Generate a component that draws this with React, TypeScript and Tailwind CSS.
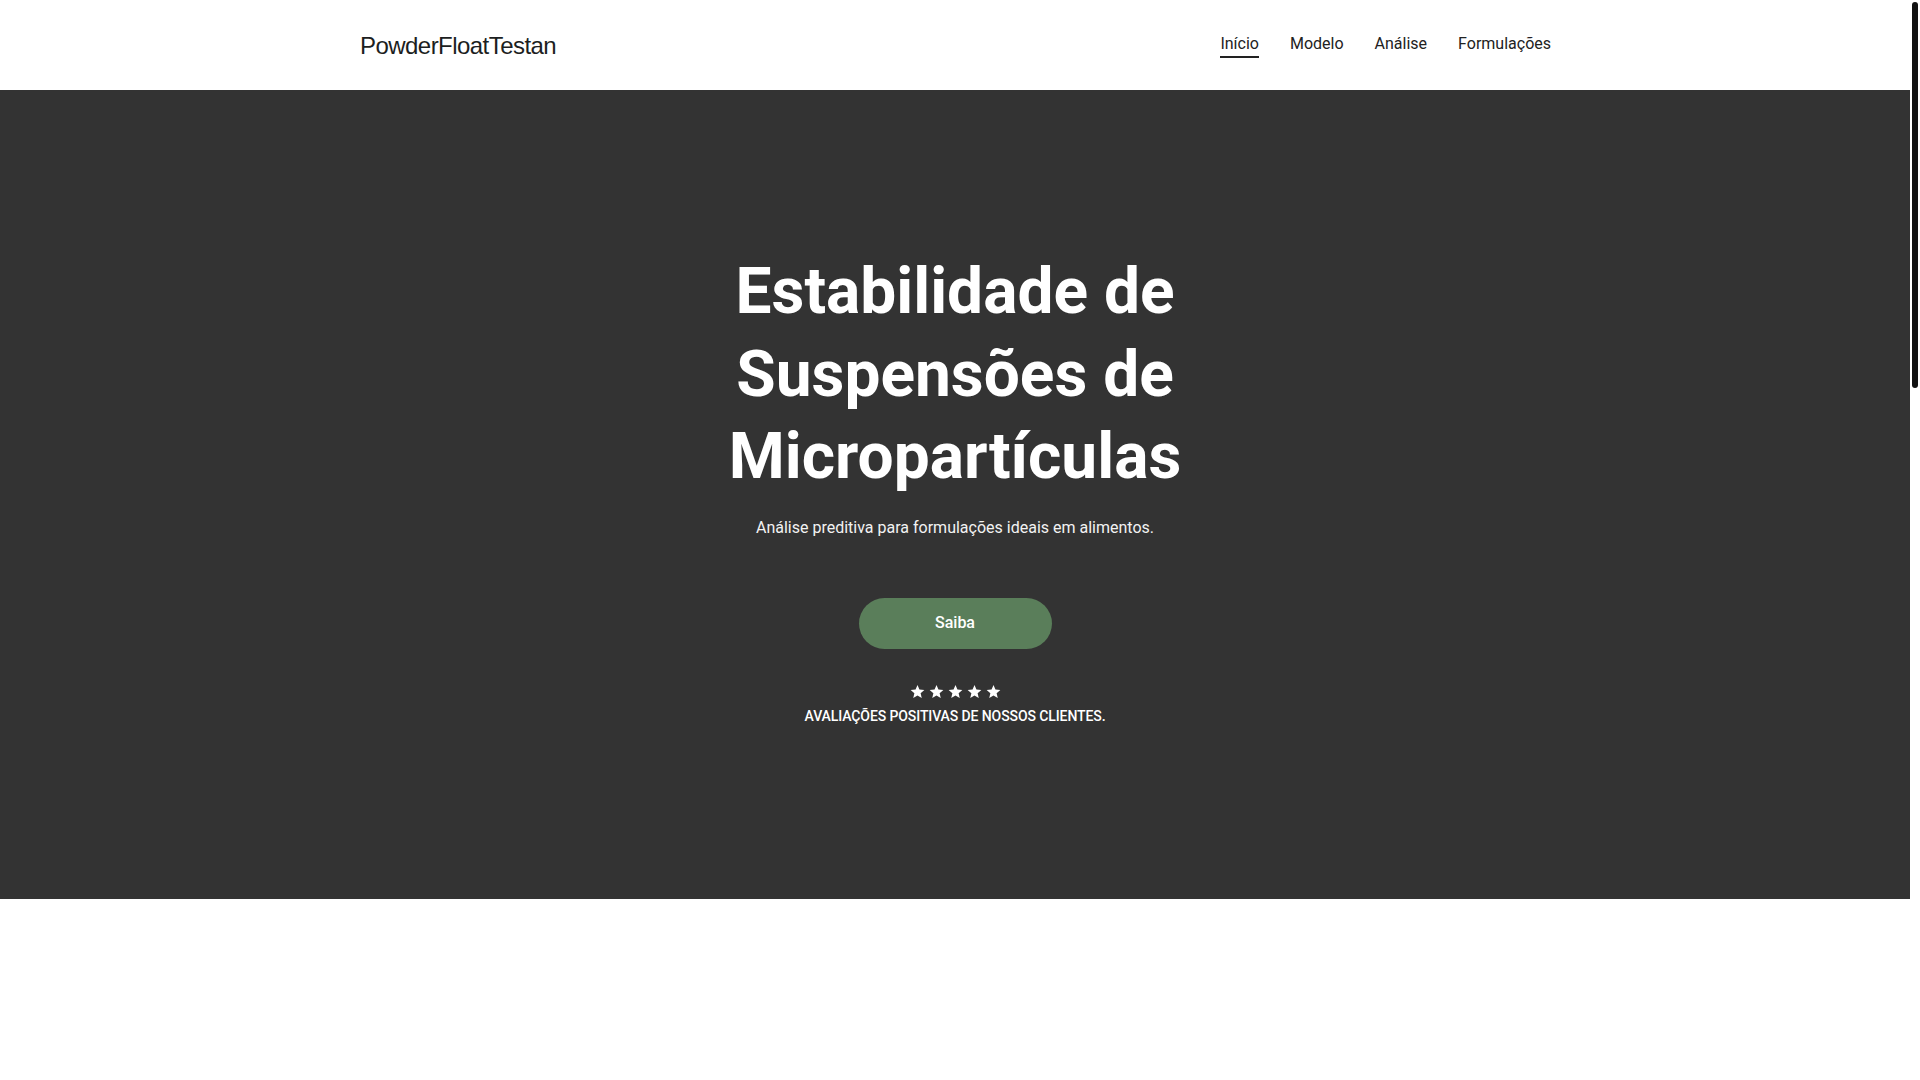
import React from 'react';

const navItems = ['Início', 'Modelo', 'Análise', 'Formulações'];

function Star() {
  return (
    <svg width="15" height="15" viewBox="0 0 24 24" className="fill-white">
      <path d="M12 1.5l3.09 7.26 7.86.7-5.96 5.2 1.78 7.7L12 18.27l-6.77 4.09 1.78-7.7-5.96-5.2 7.86-.7z" />
    </svg>
  );
}

export default function App() {
  return (
    <div className="h-screen flex overflow-hidden bg-white font-['Roboto',sans-serif]">
      <div className="flex-1 overflow-hidden">
        <header className="h-[90px] bg-white">
          <div className="w-[1190px] mx-auto h-full flex items-center justify-between">
            <a className="text-[24px] tracking-[-0.55px] text-[#1c1e21] font-['Liberation_Sans',Arial,sans-serif] pt-[2px]">
              PowderFloatTestan
            </a>
            <nav className="h-[26px] flex items-start gap-[31px] mr-[-1px]">
              {navItems.map((item, i) => (
                <a
                  key={item}
                  className={
                    i === 0
                      ? 'text-[16px] leading-6 text-[#222] border-b-2 border-[#222]'
                      : 'text-[16px] leading-6 text-[#222]'
                  }
                >
                  {item}
                </a>
              ))}
            </nav>
          </div>
        </header>

        <section className="h-[809px] bg-[#333333] flex flex-col items-center pt-[161px]">
          <h1 className="max-w-[500px] text-center text-white font-bold text-[64px] leading-[82.5px]">
            Estabilidade de Suspensões de Micropartículas
          </h1>
          <p className="mt-[17px] text-[16px] leading-6 text-[#f2f2f2]">
            Análise preditiva para formulações ideais em alimentos.
          </p>
          <button className="mt-[58px] w-[193px] h-[51px] rounded-full bg-[#5a7e5a] text-white text-[16px] font-medium">
            Saiba
          </button>
          <div className="mt-[35px] flex items-center gap-[4px]">
            <Star />
            <Star />
            <Star />
            <Star />
            <Star />
          </div>
          <p className="mt-[7px] text-[14px] leading-5 font-medium text-white uppercase tracking-[-0.1px]">
            Avaliações positivas de nossos clientes.
          </p>
        </section>

        <section className="h-[700px] bg-white" />
      </div>

      <div className="w-[10px] bg-white pt-[2px] flex justify-center">
        <div className="w-[6px] h-[386px] rounded-full bg-[#111]" />
      </div>
    </div>
  );
}
